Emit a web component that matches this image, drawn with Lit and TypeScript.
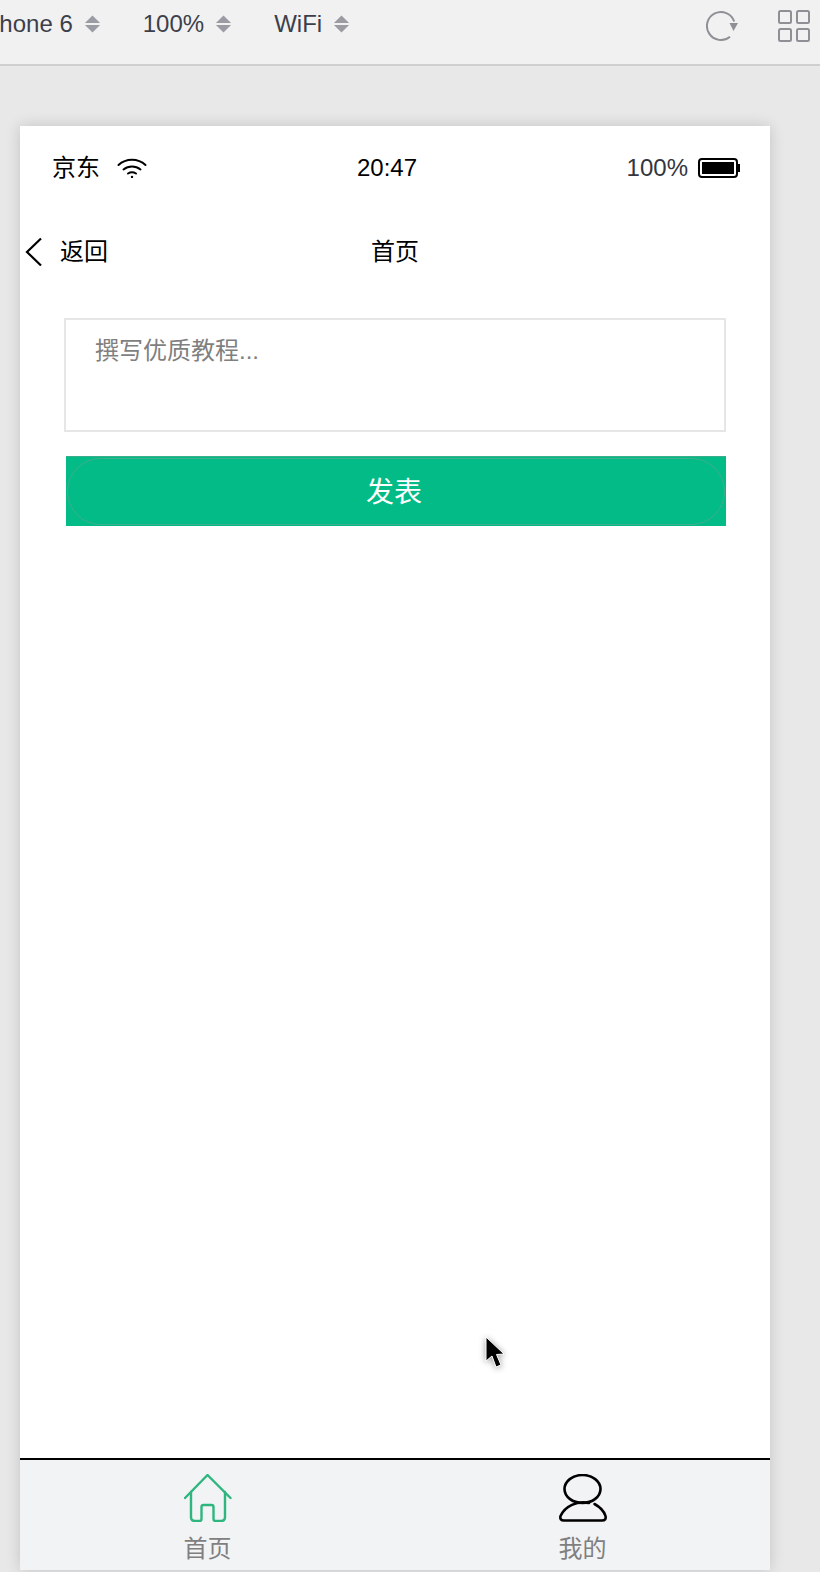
import { LitElement, html, css } from "lit";
import { customElement } from "lit/decorators.js";

@customElement("app-root")
export class AppRoot extends LitElement {
  static styles = css`
    :host {
      display: block;
      width: 820px;
      height: 1572px;
      overflow: hidden;
      background: #e8e8e8;
      font-family: "Liberation Sans", "Noto Sans CJK SC", sans-serif;
      color: #000;
      position: relative;
    }
    .toolbar {
      border-bottom: 2px solid #cfcfcf;
      background: #f1f1f1;
      display: flex;
      align-items: flex-start;
      color: #3c3f4a;
      font-size: 24px;
      line-height: 28px;
      padding-top: 10px;
      height: 54px;
    }
    .selects {
      display: flex;
      gap: 42px;
      margin-left: -22px;
      flex: 1;
    }
    .select {
      display: flex;
      align-items: center;
      gap: 11px;
      white-space: nowrap;
    }
    .arrows {
      display: block;
    }
    .tools {
      display: flex;
      gap: 40px;
      margin-right: 10px;
    }
    .phone {
      width: 750px;
      height: 1444px;
      margin: 60px 0 0 20px;
      background: #fff;
      box-shadow: 0 0 14px rgba(0, 0, 0, 0.16);
      display: flex;
      flex-direction: column;
    }
    .status {
      height: 84px;
      padding: 0 30px 0 32px;
      display: grid;
      grid-template-columns: 1fr auto 1fr;
      align-items: center;
      font-size: 24px;
      line-height: 28px;
    }
    .status-left {
      display: flex;
      align-items: center;
      gap: 17px;
    }
    .status-time {
      padding-right: 18px;
    }
    .status-right {
      display: flex;
      align-items: center;
      justify-content: flex-end;
      gap: 10px;
      color: #33353f;
    }
    .nav {
      height: 84px;
      display: grid;
      grid-template-columns: 1fr auto 1fr;
      align-items: center;
      font-size: 24px;
    }
    .nav-label {
      padding-bottom: 6px;
    }
    .back {
      display: flex;
      align-items: center;
      gap: 17px;
      padding-left: 5px;
    }
    .form {
      padding: 24px 44px 0 44px;
      flex: 1;
    }
    .input {
      width: 662px;
      height: 114px;
      box-sizing: border-box;
      border: 2px solid #e6e6e6;
      padding: 17px 29px;
      color: #7f7f7f;
      font-size: 24px;
      line-height: 28px;
    }
    .submit {
      margin: 24px 0 0 2px;
      width: 660px;
      height: 70px;
      background: #02bb86;
      border-top: 1px solid #3cab8a;
      box-sizing: border-box;
      color: #fff;
      font-size: 28px;
      display: flex;
      padding: 1px;
    }
    .submit-inner {
      flex: 1;
      border: 1px solid #3fae8c;
      border-radius: 34px;
      display: flex;
      align-items: center;
      justify-content: center;
      padding: 0 4px 4px 0;
    }
    .tabbar {
      height: 110px;
      border-top: 2px solid #000;
      background: #f2f3f5;
      display: grid;
      grid-template-columns: 1fr 1fr;
    }
    .tab {
      display: flex;
      flex-direction: column;
      align-items: center;
      padding-top: 14px;
      color: #7f7f7f;
      font-size: 24px;
      line-height: 28px;
      gap: 13px;
    }
    .tab svg {
      display: block;
    }
    .cursor {
      position: absolute;
      left: 484px;
      top: 1336px;
      filter: drop-shadow(0 1px 3px rgba(0, 0, 0, 0.4));
    }
  `;

  private arrows() {
    return html`<svg class="arrows" width="17" height="20" viewBox="0 0 18 20">
      <path d="M9 1 L17 9 H1 Z M1 11 H17 L9 19 Z" fill="#9b9ba3"></path>
    </svg>`;
  }

  render() {
    return html`
      <div class="toolbar">
        <div class="selects">
          <div class="select"><span>iPhone 6</span>${this.arrows()}</div>
          <div class="select"><span>100%</span>${this.arrows()}</div>
          <div class="select"><span>WiFi</span>${this.arrows()}</div>
        </div>
        <div class="tools">
          <svg width="32" height="32" viewBox="0 0 32 32" fill="none" stroke="#8f9096" stroke-width="2">
            <path d="M28.200 11.500 A14 14 0 1 0 24 26.700"></path>
            <path d="M23.500 13 H32 L27.500 21 Z" fill="#8f9096" stroke="none"></path>
          </svg>
          <svg width="32" height="32" viewBox="0 0 32 32" fill="none" stroke="#8f9096" stroke-width="2">
            <rect x="1" y="1" width="12" height="12" rx="1.5"></rect>
            <rect x="19" y="1" width="12" height="12" rx="1.5"></rect>
            <rect x="1" y="19" width="12" height="12" rx="1.5"></rect>
            <rect x="19" y="19" width="12" height="12" rx="1.5"></rect>
          </svg>
        </div>
      </div>
      <div class="phone">
        <div class="status">
          <div class="status-left">
            <span>京东</span>
            <svg width="30" height="20" viewBox="0 0 30 20" fill="none" stroke="#000" stroke-width="2" stroke-linecap="round">
              <path d="M1.500 7 C9 0 21 0 28.500 7"></path>
              <path d="M6.500 11.500 C11.500 7.500 18.500 7.500 23.500 11.500"></path>
              <path d="M11 15.500 C13.500 14 16.500 14 19 15.500"></path>
              <circle cx="15" cy="19" r="1.2" fill="#000" stroke="none"></circle>
            </svg>
          </div>
          <span class="status-time">20:47</span>
          <div class="status-right">
            <span>100%</span>
            <svg width="42" height="20" viewBox="0 0 42 20">
              <rect x="1" y="1" width="38" height="18" rx="3" fill="#fff" stroke="#000" stroke-width="2"></rect>
              <rect x="4" y="4" width="32" height="12" fill="#000"></rect>
              <path d="M40 6 H42 V14 H40 Z" fill="#000"></path>
            </svg>
          </div>
        </div>
        <div class="nav">
          <div class="back">
            <svg width="18" height="30" viewBox="0 0 18 30" fill="none" stroke="#000" stroke-width="2.2">
              <path d="M16 1.500 L2 15 L16 28.500"></path>
            </svg>
            <span class="nav-label">返回</span>
          </div>
          <span class="nav-label">首页</span>
          <span></span>
        </div>
        <div class="form">
          <div class="input">撰写优质教程...</div>
          <div class="submit"><div class="submit-inner">发表</div></div>
        </div>
        <div class="tabbar">
          <div class="tab">
            <svg width="48" height="48" viewBox="0 0 48 48" fill="none" stroke="#2fb67f" stroke-width="2.4" stroke-linecap="round" stroke-linejoin="round">
              <path d="M1 24 L23.500 1 L46.500 24"></path>
              <path d="M7 18 V43 Q7 47 11 47 H15.500 Q17.500 47 17.500 45 V33 Q17.500 31 19.500 31 H27.500 Q29.500 31 29.500 33 V45 Q29.500 47 31.500 47 H37 Q41 47 41 43 V18"></path>
            </svg>
            <span>首页</span>
          </div>
          <div class="tab">
            <svg width="48" height="48" viewBox="0 0 48 48" fill="none" stroke="#000" stroke-width="2.6" stroke-linecap="round" stroke-linejoin="round">
              <ellipse cx="23.500" cy="15" rx="18" ry="14"></ellipse>
              <path d="M30 29 C18 26.500 6 32 1.500 42 Q0.500 46.500 5 46.500 H43 Q47.500 46.500 46.500 42 C45 37 41 33 35.500 30"></path>
            </svg>
            <span>我的</span>
          </div>
        </div>
      </div>
      <svg class="cursor" width="22" height="34" viewBox="0 0 22 34">
        <path d="M2 1 V25 L8 20 L12 31 L17 29 L12.500 18.500 L20 18 Z" fill="#000" stroke="#fff" stroke-width="1"></path>
      </svg>
    `;
  }
}
